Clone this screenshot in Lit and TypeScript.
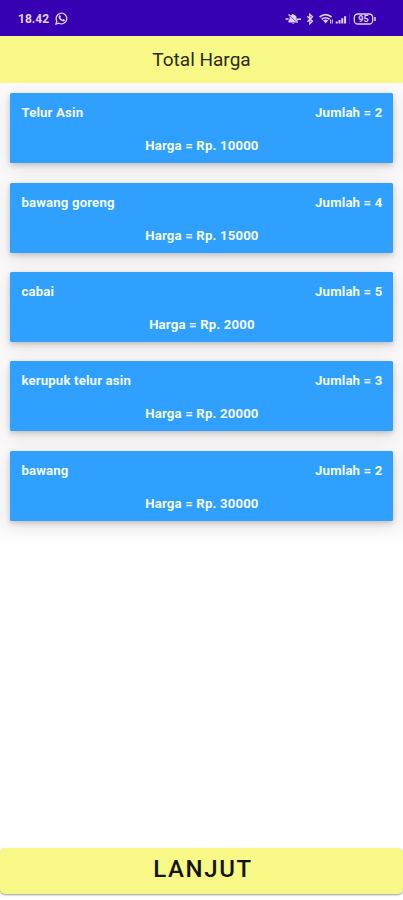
import { LitElement, html, css } from "lit";
import { customElement, property } from "lit/decorators.js";

@customElement("status-bar")
class StatusBar extends LitElement {
  static styles = css`
    :host {
      display: flex;
      align-items: center;
      height: 36px;
      box-sizing: border-box;
      padding: 1px 26px 0 18px;
      background: #3700b3;
      color: #e0d4f6;
      font: 700 12px/16px Roboto, sans-serif;
    }
    .time { width: 37px; }
    .spacer { flex: 1; }
    svg { display: block; fill: none; stroke: currentColor; }
    .solid { fill: currentColor; stroke: none; }
    .level { fill: currentColor; stroke: none; font: 700 9px Roboto, sans-serif; }
  `;

  render() {
    return html`
      <span class="time">18.42</span>
      <svg width="13" height="13" viewBox="0 0 13 13" stroke-width="1.3">
        <path d="M1 12l.8-3A5.3 5.3 0 1 1 4 11.2z" />
        <path class="solid" d="M4.2 3.4l1-.2.8 1.8-.6.8c.5.9 1.1 1.5 2 1.9l.8-.8 1.7.8c.1 1.2-.8 1.9-1.9 1.7C5.5 8.9 3.6 6.9 3.5 5c0-.7.2-1.2.7-1.6z" />
      </svg>
      <span class="spacer"></span>
      <svg width="92" height="16" viewBox="0 0 92 16">
        <path class="solid" d="M3.5 11.5V9.6l1-1V7c0-1.8 1-3 2.5-3.300V3h1.600v.7C10.600 4 11.600 5.200 11.600 7v1.600l1 1v1.900zM7 12h2.400c-.2 1-2.200 1-2.400 0z" />
        <path d="M.5 8h3M12 8.300h4M3.500 3.500l9 8" stroke-width="1.400" />
        <path d="M4.600 5l7.200 6.300" stroke="#3700b3" stroke-width=".6" />
        <path d="M22.300 5.300l5.200 5-2.700 2.400V3.300l2.700 2.400-5.200 5" stroke-width="1.300" />
        <path d="M34.600 6q6-4.600 12 0M36.700 8.200q3.900-2.900 7.800 0" stroke-width="1.700" />
        <path class="solid" d="M38 9.300q2.600-1.600 5.200 0l-2.600 3.200z" />
        <path d="M45.600 8.500v4M47.300 8.500v4" stroke-width="1" />
        <path d="M51.700 12.500v-2M54.500 12.500V9M57.300 12.500V7.200M60.100 12.500V5.200" stroke-width="2" />
        <path d="M64.500 3v10" stroke="#5a31c2" stroke-width=".8" />
        <rect x="69.300" y="3" width="18.400" height="10" rx="3.500" stroke-width="1.300" />
        <path d="M90 6v4" stroke-width="1.500" />
        <text class="level" x="73.300" y="11.200">95</text>
      </svg>
    `;
  }
}

@customElement("order-item")
class OrderItem extends LitElement {
  @property() name = "";
  @property({ type: Number }) count = 0;
  @property({ type: Number }) price = 0;

  static styles = css`
    :host {
      display: flex;
      flex-direction: column;
      justify-content: space-between;
      height: 70px;
      box-sizing: border-box;
      padding: 12px 10.500px 10px 11px;
      border-radius: 1.500px;
      background: #30a0ff;
      box-shadow: 0 2px 5px rgba(60, 50, 55, 0.22), 0 5px 16px rgba(60, 50, 55, 0.12);
      color: #f3faff;
      font: 700 13.200px/15px Roboto, sans-serif;
      letter-spacing: 0.16px;
    }
    .top { display: flex; justify-content: space-between; }
    .price { text-align: center; }
  `;

  render() {
    return html`
      <div class="top"><span>${this.name}</span><span>Jumlah = ${this.count}</span></div>
      <div class="price">Harga = Rp. ${this.price}</div>
    `;
  }
}

@customElement("app-root")
class AppRoot extends LitElement {
  private items = [
    { name: "Telur Asin", count: 2, price: 10000 },
    { name: "bawang goreng", count: 4, price: 15000 },
    { name: "cabai", count: 5, price: 2000 },
    { name: "kerupuk telur asin", count: 3, price: 20000 },
    { name: "bawang", count: 2, price: 30000 },
  ];

  static styles = css`
    :host {
      display: flex;
      flex-direction: column;
      height: 900px;
      overflow: hidden;
      background: #fff;
      font-family: Roboto, sans-serif;
    }
    .title {
      height: 47px;
      background: #f8f887;
      color: #2c2a19;
      text-align: center;
      font-size: 19px;
      line-height: 47px;
    }
    .list {
      display: flex;
      flex-direction: column;
      gap: 19.350px;
      padding: 10.200px 10px 24px 10.400px;
      background: linear-gradient(#fbf9fa 0, #faf8f9 20px, #faf8f9 calc(100% - 24px), #fff 100%);
    }
    .spacer { flex: 1; }
    .next {
      height: 46px;
      margin: 0 0 6px;
      padding: 0 0 5px 3px;
      box-sizing: border-box;
      border: 0;
      border-radius: 5px;
      background: #f8f887;
      box-shadow: 0 1px 2px rgba(0, 0, 0, 0.4);
      color: #15140b;
      font: 500 24px/40px Roboto, sans-serif;
      letter-spacing: 1.600px;
    }
  `;

  render() {
    return html`
      <status-bar></status-bar>
      <div class="title">Total Harga</div>
      <div class="list">
        ${this.items.map(
          (i) => html`<order-item .name=${i.name} .count=${i.count} .price=${i.price}></order-item>`
        )}
      </div>
      <div class="spacer"></div>
      <button class="next">LANJUT</button>
    `;
  }
}
